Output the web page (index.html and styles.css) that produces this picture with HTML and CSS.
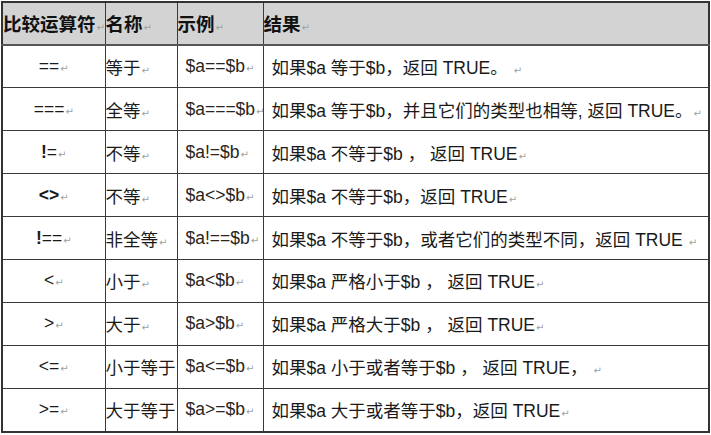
FILE: index.html
```html
<!DOCTYPE html>
<html lang="zh-CN">
<head>
<meta charset="utf-8">
<title>比较运算符</title>
<link rel="stylesheet" href="styles.css">
</head>
<body>
<table class="ops">
  <colgroup>
    <col class="c1"><col class="c2"><col class="c3"><col class="c4">
  </colgroup>
  <thead>
    <tr class="head">
      <th class="h1">比较运算符<span class="pm">↵</span></th>
      <th class="h2">名称<span class="pm">↵</span></th>
      <th class="h3">示例<span class="pm">↵</span></th>
      <th class="h4">结果<span class="pm">↵</span></th>
    </tr>
  </thead>
  <tbody>
    <tr>
      <td class="op">==<span class="pm">↵</span></td>
      <td class="name">等于<span class="pm">↵</span></td>
      <td class="ex">$a==$b<span class="pm">↵</span></td>
      <td class="res">如果$a 等于$b，返回 TRUE。 <span class="pm">↵</span></td>
    </tr>
    <tr>
      <td class="op">===<span class="pm">↵</span></td>
      <td class="name">全等<span class="pm">↵</span></td>
      <td class="ex">$a===$b<span class="pm">↵</span></td>
      <td class="res">如果$a 等于$b，并且它们的类型也相等, 返回 TRUE。<span class="pm">↵</span></td>
    </tr>
    <tr>
      <td class="op"><b>!</b>=<span class="pm">↵</span></td>
      <td class="name">不等<span class="pm">↵</span></td>
      <td class="ex">$a!=$b<span class="pm">↵</span></td>
      <td class="res">如果$a 不等于$b ， 返回 TRUE<span class="pm">↵</span></td>
    </tr>
    <tr>
      <td class="op"><b>&lt;&gt;</b><span class="pm">↵</span></td>
      <td class="name">不等<span class="pm">↵</span></td>
      <td class="ex">$a&lt;&gt;$b<span class="pm">↵</span></td>
      <td class="res">如果$a 不等于$b，返回 TRUE<span class="pm">↵</span></td>
    </tr>
    <tr>
      <td class="op"><b>!</b>==<span class="pm">↵</span></td>
      <td class="name">非全等<span class="pm">↵</span></td>
      <td class="ex">$a!==$b<span class="pm">↵</span></td>
      <td class="res">如果$a 不等于$b，或者它们的类型不同，返回 TRUE <span class="pm">↵</span></td>
    </tr>
    <tr>
      <td class="op">&lt;<span class="pm">↵</span></td>
      <td class="name">小于<span class="pm">↵</span></td>
      <td class="ex">$a&lt;$b<span class="pm">↵</span></td>
      <td class="res">如果$a 严格小于$b ， 返回 TRUE<span class="pm">↵</span></td>
    </tr>
    <tr>
      <td class="op">&gt;<span class="pm">↵</span></td>
      <td class="name">大于<span class="pm">↵</span></td>
      <td class="ex">$a&gt;$b<span class="pm">↵</span></td>
      <td class="res">如果$a 严格大于$b ， 返回 TRUE<span class="pm">↵</span></td>
    </tr>
    <tr>
      <td class="op">&lt;=<span class="pm">↵</span></td>
      <td class="name">小于等于<span class="pm">↵</span></td>
      <td class="ex">$a&lt;=$b<span class="pm">↵</span></td>
      <td class="res">如果$a 小于或者等于$b ， 返回 TRUE， <span class="pm">↵</span></td>
    </tr>
    <tr>
      <td class="op">&gt;=<span class="pm">↵</span></td>
      <td class="name">大于等于<span class="pm">↵</span></td>
      <td class="ex">$a&gt;=$b<span class="pm">↵</span></td>
      <td class="res">如果$a 大于或者等于$b，返回 TRUE<span class="pm">↵</span></td>
    </tr>
  </tbody>
</table>
</body>
</html>
```

FILE: styles.css
```css
html, body {
  margin: 0;
  padding: 0;
  background: #ffffff;
}

body {
  font-family: "Liberation Sans", "Noto Sans CJK SC", sans-serif;
  color: #1a1a1a;
}

.ops {
  margin: 1px 0 0 1px;
  border-collapse: collapse;
  table-layout: fixed;
  width: 707px;
  border: 2px solid #333333;
}

.c1 { width: 103px; }
.c2 { width: 72px; }
.c3 { width: 86px; }
.c4 { width: 446px; }

.ops th,
.ops td {
  border: 1px solid #3a3a3a;
  padding: 0;
  white-space: nowrap;
  overflow: hidden;
  vertical-align: middle;
}

.ops td {
  height: 41.9px;
  font-size: 17.5px;
}

.head th {
  height: 40.5px;
  background: #d3d3d3;
  font-size: 18.5px;
  font-weight: bold;
  text-align: left;
  border-bottom: 2px solid #555555;
  color: #111111;
}

.h1 { padding-left: 7px; }
.h2 { padding-left: 2px; }
.h3 { padding-left: 8px; }
.h4 { padding-left: 8px; }

.op {
  text-align: center;
}

.op b {
  font-weight: bold;
}

.name {
  padding-left: 0;
}

.ex {
  padding-left: 8px !important;
  color: #2a2520;
}

.res {
  padding-left: 8px !important;
}

.pm {
  font-family: "DejaVu Sans", sans-serif;
  font-size: 10px;
  font-weight: normal;
  color: #a0a0a0;
  margin-left: 1px;
}
```
